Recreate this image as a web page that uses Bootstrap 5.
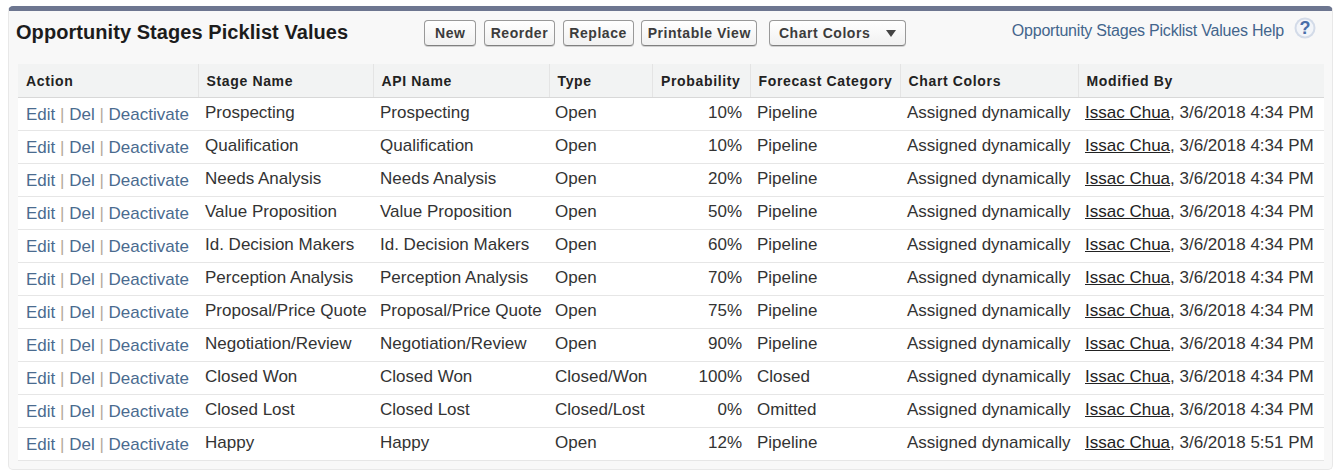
<!DOCTYPE html>
<html lang="en">
<head>
    <meta charset="UTF-8">
    <meta name="viewport" content="width=device-width, initial-scale=1.0">
    <title>Opportunity Stages Picklist Values</title>
    <link href="https://cdn.jsdelivr.net/npm/bootstrap@5.3.0/dist/css/bootstrap.min.css" rel="stylesheet">
    <style>
        body { background: #fff; font-family: "Liberation Sans", Arial, sans-serif; color: #222; overflow: hidden; }
        .stage-panel { margin: 6px 4px 0 8px; height: 464px; background: #f8f8f8; border: 1px solid #e8e8e8; border-top: 5px solid #6d7690; border-radius: 5px; padding: 0 8px 0 9px; }
        .panel-head { height: 53px; padding-top: 9px; }
        .panel-title { width: 410px; margin: 0; margin-left: -2px; font-size: 20px; line-height: 24px; font-weight: 700; letter-spacing: .06px; color: #1c1c1c; }
        .panel-btns { gap: 7.67px; width: 590px; }
        .sf-btn { font-size: 14px; font-weight: 700; letter-spacing: .55px; color: #3c3c3c; background: linear-gradient(#fff, #f1f1f1); border: 1px solid #999; border-bottom-color: #808080; border-radius: 4px; box-shadow: 0 1px 0 #d0d0d0; height: 26px; padding: 0; line-height: 24px; white-space: nowrap; }
        .btn-new { width: 52px; }
        .btn-reorder, .btn-replace { width: 71px; }
        .btn-print { width: 116px; }
        .btn-colors { width: 137px; margin-left: 4px; padding: 0 9px; }
        .caret-down { width: 0; height: 0; border-left: 5px solid transparent; border-right: 5px solid transparent; border-top: 7px solid #444; }
        .help-area { flex: 1; gap: 10px; margin-top: -1px; padding-right: 8px; white-space: nowrap; }
        .help-link { color: #43658c; font-size: 16px; line-height: 24px; letter-spacing: -.22px; text-decoration: none; }
        .help-icon { margin-top: -2px; }
        .stage-table { width: 1306px; table-layout: fixed; border-collapse: collapse; background: #fff; font-size: 17px; }
        .stage-table th { height: 33px; padding: 2px 0 0 8px; background: #f2f3f3; font-size: 14px; font-weight: 700; letter-spacing: .65px; color: #222; border-right: 1px solid #e4e4e4; border-bottom: 1px solid #d8d8d8; vertical-align: middle; white-space: nowrap; }
        .stage-table th:last-child { border-right: 0; }
        .stage-table td { height: 33px; padding: 0 0 2px 7px; border-bottom: 1px solid #e6e6e6; vertical-align: middle; white-space: nowrap; overflow: hidden; color: #333; }
        .stage-table td:nth-child(4) { padding-left: 6px; }
        .stage-table td.act { padding: 2px 0 0 8px; color: #b5aa9a; }
        .stage-table td a.rowlink { color: #4a6b8f; text-decoration: none; }
        .stage-table td a.user { color: #222; text-decoration: underline; }
        .stage-table .num { text-align: right; padding-right: 8px; padding-left: 0; }
        .stage-table th.num { padding-right: 9px; }
        .cw-1 { width: 180px; } .cw-2 { width: 175px; } .cw-3 { width: 176px; } .cw-4 { width: 103px; }
        .cw-5 { width: 98px; } .cw-6 { width: 150px; } .cw-7 { width: 178px; } .cw-8 { width: 246px; }
    </style>
</head>
<body>
    <div class="stage-panel">
        <div class="panel-head d-flex align-items-start">
            <h2 class="panel-title">Opportunity Stages Picklist Values</h2>
            <div class="panel-btns d-flex">
                <button type="button" class="sf-btn btn-new">New</button>
                <button type="button" class="sf-btn btn-reorder">Reorder</button>
                <button type="button" class="sf-btn btn-replace">Replace</button>
                <button type="button" class="sf-btn btn-print">Printable View</button>
                <button type="button" class="sf-btn btn-colors d-flex align-items-center justify-content-between">Chart Colors <span class="caret-down"></span></button>
            </div>
            <div class="help-area d-flex align-items-start justify-content-end">
                <a href="#" class="help-link">Opportunity Stages Picklist Values Help</a>
                <svg class="help-icon" width="22" height="22" viewBox="0 0 22 22">
                    <circle cx="11" cy="11" r="10.5" fill="#d3dbe8"/>
                    <circle cx="11" cy="11" r="8.5" fill="#f3f5f9"/>
                    <text x="11" y="17" text-anchor="middle" font-family="Liberation Sans" font-weight="700" font-size="18" fill="#4a6ea8">?</text>
                </svg>
            </div>
        </div>
        <table class="stage-table">
            <colgroup>
                <col class="cw-1"><col class="cw-2"><col class="cw-3"><col class="cw-4">
                <col class="cw-5"><col class="cw-6"><col class="cw-7"><col class="cw-8">
            </colgroup>
            <thead>
                <tr>
                    <th>Action</th><th>Stage Name</th><th>API Name</th><th>Type</th>
                    <th class="num">Probability</th><th>Forecast Category</th><th>Chart Colors</th><th>Modified By</th>
                </tr>
            </thead>
            <tbody id="stageRows"></tbody>
        </table>
    </div>

    <script>
        const stages = [
            ["Prospecting", "Open", "10%", "Pipeline", "3/6/2018 4:34 PM"],
            ["Qualification", "Open", "10%", "Pipeline", "3/6/2018 4:34 PM"],
            ["Needs Analysis", "Open", "20%", "Pipeline", "3/6/2018 4:34 PM"],
            ["Value Proposition", "Open", "50%", "Pipeline", "3/6/2018 4:34 PM"],
            ["Id. Decision Makers", "Open", "60%", "Pipeline", "3/6/2018 4:34 PM"],
            ["Perception Analysis", "Open", "70%", "Pipeline", "3/6/2018 4:34 PM"],
            ["Proposal/Price Quote", "Open", "75%", "Pipeline", "3/6/2018 4:34 PM"],
            ["Negotiation/Review", "Open", "90%", "Pipeline", "3/6/2018 4:34 PM"],
            ["Closed Won", "Closed/Won", "100%", "Closed", "3/6/2018 4:34 PM"],
            ["Closed Lost", "Closed/Lost", "0%", "Omitted", "3/6/2018 4:34 PM"],
            ["Happy", "Open", "12%", "Pipeline", "3/6/2018 5:51 PM"]
        ];

        // Строки таблицы
        document.getElementById("stageRows").innerHTML = stages.map(s => `
            <tr>
                <td class="act"><a href="#" class="rowlink">Edit</a> | <a href="#" class="rowlink">Del</a> | <a href="#" class="rowlink">Deactivate</a></td>
                <td>${s[0]}</td><td>${s[0]}</td><td>${s[1]}</td>
                <td class="num">${s[2]}</td><td>${s[3]}</td><td>Assigned dynamically</td>
                <td><a href="#" class="user">Issac Chua</a>, ${s[4]}</td>
            </tr>`).join("");
    </script>
    <script src="https://cdn.jsdelivr.net/npm/bootstrap@5.3.0/dist/js/bootstrap.bundle.min.js"></script>
</body>
</html>
